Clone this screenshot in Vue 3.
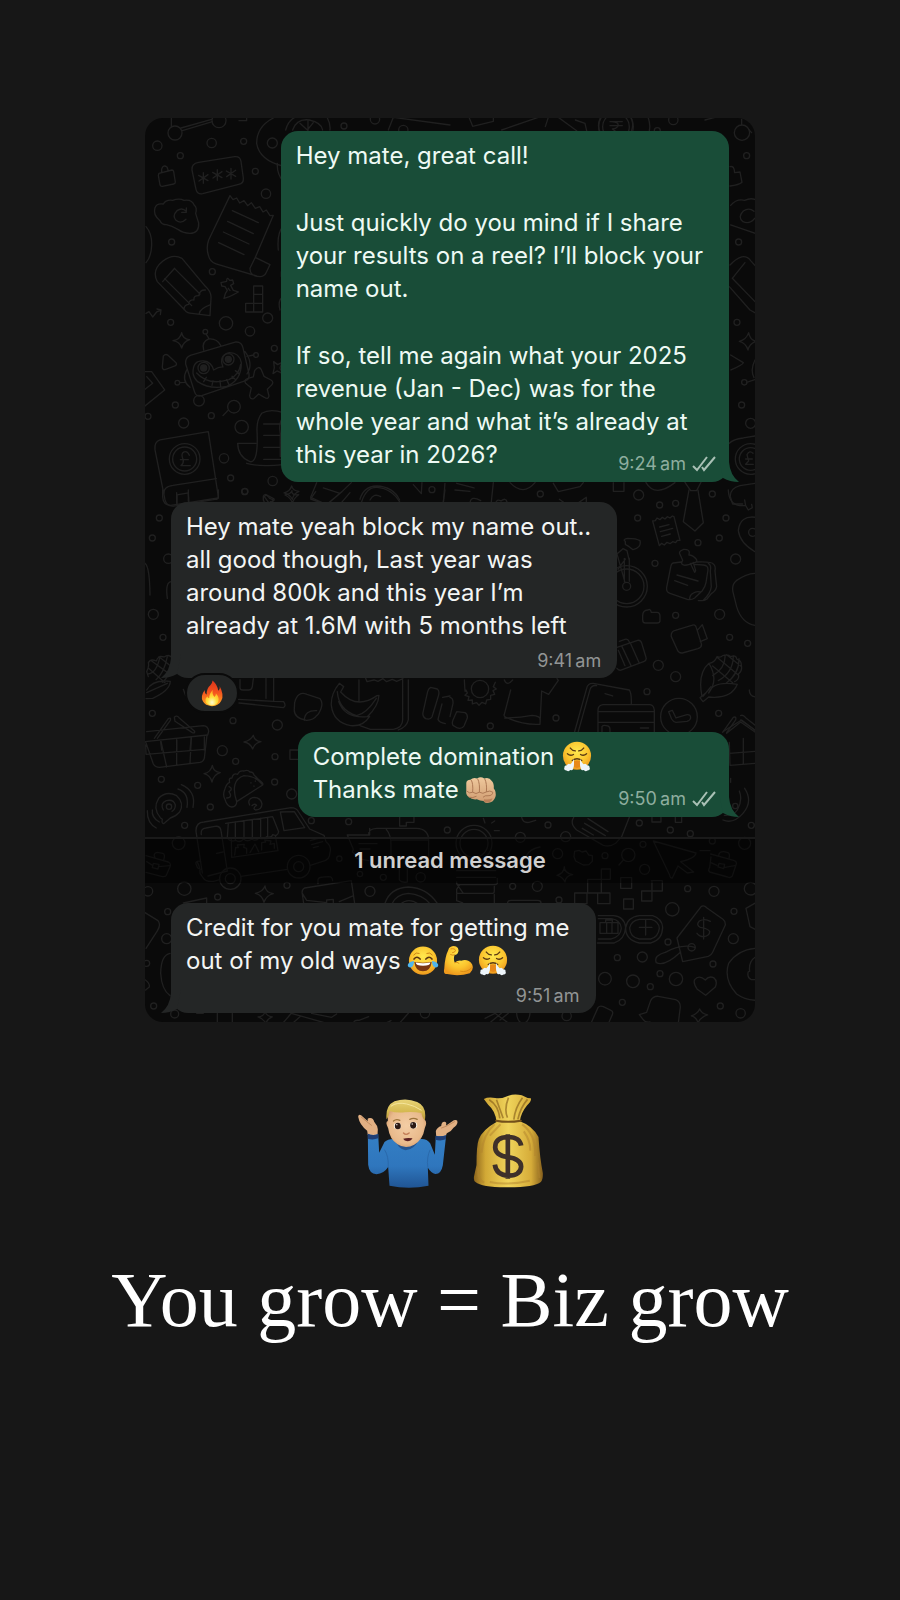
<script setup>
const messages = [
  {
    id: 1,
    side: 'out',
    layout: 'inset',
    time: '9:24\u2009am',
    paragraphs: [
      [['Hey mate, great call!']],
      [['Just quickly do you mind if I share'], ['your results on a reel? I’ll block your'], ['name out.']],
      [['If so, tell me again what your 2025'], ['revenue (Jan - Dec) was for the'], ['whole year and what it’s already at'], ['this year in 2026?']],
    ],
  },
  {
    id: 2,
    side: 'in',
    layout: 'stacked',
    time: '9:41\u2009am',
    reaction: 'fire',
    paragraphs: [
      [['Hey mate yeah block my name out..'], ['all good though, Last year was'], ['around 800k and this year I’m'], ['already at 1.6M with 5 months left']],
    ],
  },
  {
    id: 3,
    side: 'out',
    layout: 'beside',
    time: '9:50\u2009am',
    paragraphs: [
      [['Complete domination ', 'steam'], ['Thanks mate ', 'fist']],
    ],
  },
  {
    id: 4,
    side: 'in',
    layout: 'stacked',
    time: '9:51\u2009am',
    unread: true,
    paragraphs: [
      [['Credit for you mate for getting me'], ['out of my old ways ', 'joy', 'muscle', 'steam']],
    ],
  },
];

const emojiNames = {
  steam: 'face with steam from nose',
  fist: 'oncoming fist',
  joy: 'face with tears of joy',
  muscle: 'flexed biceps',
  fire: 'fire',
};

// wallpaper bubbles: each tile has its own origin, dots are [x, y, radius]
const tiles = [
  { at: [140, 110], dots: [[52,107,14],[215,99,14],[121,137,9],[311,94,9],[397,99,15],[105,69,21],[237,32,21],[346,184,9],[378,251,14],[95,396,9],[217,485,9],[92,637,9],[258,640,20],[330,664,14],[383,624,15],[403,715,9],[106,885,9],[24,919,9],[214,917,9],[282,890,19],[131,939,15],[305,951,20],[252,1045,14],[272,1104,9],[398,1113,14],[315,1144,9],[177,872,16],[196,665,7],[348,735,7],[112,818,7],[612,48,9],[705,28,14],[790,60,14],[876,1139,9],[134,1047,46],[134,1047,36]] },
  { at: [450, 110], dots: [[670,30,14],[876,68,23],[890,137,9],[866,396,9],[861,637,9],[875,885,9],[902,940,15],[883,817,8],[498,50,52],[498,50,40],[902,1047,46],[902,1047,34],[622,62,9]] },
  { at: [140, 490], dots: [[58,84,9],[37,144,9],[40,373,15],[69,442,9],[37,670,9],[279,692,9],[412,705,15],[85,206,14],[314,5,9]] },
  { at: [450, 490], dots: [[271,12,9],[566,15,15],[629,45,9],[677,40,9],[787,12,9],[828,84,9],[563,84,9],[744,158,9],[808,144,9],[857,207,15],[615,220,9],[677,376,9],[809,373,15],[839,442,9],[893,460,9],[625,526,15],[677,560,15],[591,605,9],[806,670,9],[318,684,9],[121,708,9],[530,289,62],[530,289,52],[530,289,12],[90,597,26],[687,680,55],[908,127,12]] },
  { at: [140, 720], dots: [[247,92,15],[287,124,9],[405,110,9],[404,186,9],[455,222,15],[64,178,9],[173,196,9],[211,261,9],[134,316,9],[116,370,19],[133,506,20],[233,531,9],[441,496,9],[24,514,14],[514,302,9],[626,305,9],[598,416,8],[690,514,15],[660,462,8],[730,472,9],[842,472,14],[922,330,9],[271,476,32],[271,476,15],[476,440,34],[476,440,15],[87,260,8],[83,575,9],[80,656,15],[41,858,9],[104,882,12],[20,730,9],[855,880,14]] },
  { at: [450, 720], dots: [[294,315,9],[211,352,15],[347,350,15],[568,309,9],[661,330,9],[721,341,9],[579,373,9],[323,401,15],[465,407,9],[535,405,20],[584,448,15],[787,363,9],[884,370,18],[904,316,9],[188,499,9],[262,499,15],[327,540,9],[713,506,9],[792,514,15],[667,568,20],[852,574,9],[850,656,15],[654,666,9],[502,713,9],[577,711,15],[630,761,9],[678,777,20],[465,776,19],[549,784,19],[601,800,9],[517,847,9],[789,732,9],[811,858,9],[872,880,14],[725,682,11],[72,370,54],[72,370,42],[902,506,19],[856,258,8],[350,888,14]] },
];
</script>

<template>
  <main class="page">
    <!-- shared emoji artwork -->
    <svg class="sprites" aria-hidden="true">
      <defs>
        <radialGradient id="yellow-fill" cx=".5" cy=".35" r=".65">
          <stop offset="0" stop-color="#ffe94f" />
          <stop offset=".6" stop-color="#fbc52e" />
          <stop offset="1" stop-color="#ee991d" />
        </radialGradient>
        <linearGradient id="hand-fill" x1="0" y1="0" x2="0" y2="1">
          <stop offset="0" stop-color="#efc99d" />
          <stop offset="1" stop-color="#cf9b70" />
        </linearGradient>
        <linearGradient id="flame-fill" x1="0" y1="0" x2="0" y2="1">
          <stop offset="0" stop-color="#d9341b" />
          <stop offset=".45" stop-color="#f4511e" />
          <stop offset="1" stop-color="#ffab22" />
        </linearGradient>
        <radialGradient id="core-fill" cx=".5" cy=".8" r=".7">
          <stop offset="0" stop-color="#fffbd0" />
          <stop offset=".5" stop-color="#ffe13d" />
          <stop offset="1" stop-color="#ffad22" />
        </radialGradient>
      </defs>
      <symbol id="steam" viewBox="0 0 100 100">
        <circle cx="50" cy="46" r="44" fill="url(#yellow-fill)" />
        <ellipse cx="50" cy="72" rx="13" ry="12" fill="#e88918" />
        <g fill="none" stroke="#5b3a13" stroke-width="4" stroke-linecap="round">
          <path d="M29 22Q36 31 45 31M71 22Q64 31 55 31" />
          <path d="M20 40Q29 48 39 42M80 40Q71 48 61 42" />
          <path d="M35 61Q50 50 65 61" />
        </g>
        <g fill="#edf5fa">
          <path d="M40 56Q42 75 39 83Q38 93 29 91Q24 97 17 92Q7 91 11 82Q10 76 18 76Q23 68 29 73Q36 67 40 56Z" />
          <path d="M60 56Q58 75 61 83Q62 93 71 91Q76 97 83 92Q93 91 89 82Q90 76 82 76Q77 68 71 73Q64 67 60 56Z" />
        </g>
      </symbol>
      <symbol id="joy" viewBox="0 0 100 100">
        <circle cx="50" cy="49" r="44" fill="url(#yellow-fill)" />
        <path d="M21 31Q28 21 38 26M79 31Q72 21 62 26" fill="none" stroke="#c98116" stroke-width="3" stroke-linecap="round" />
        <path d="M22 44Q31 33 41 44M78 44Q69 33 59 44" fill="none" stroke="#5b3510" stroke-width="5" stroke-linecap="round" />
        <path d="M23 53Q50 58 77 53Q74 82 50 82Q26 82 23 53Z" fill="#7a3714" />
        <path d="M27 55Q50 59 73 55Q73 65 50 65Q28 65 27 55Z" fill="#fff" />
        <path d="M22 50Q21 69 11 70Q0 69 3 60Q6 53 22 50ZM78 50Q79 69 89 70Q100 69 97 60Q94 53 78 50Z" fill="#4fb5ee" />
      </symbol>
      <symbol id="muscle" viewBox="0 0 100 100">
        <path d="M25 7Q36 0 44 5Q54 10 51 21Q48 31 39 31Q35 45 40 55Q50 47 60 49Q81 42 94 60Q101 77 87 88Q54 99 16 91Q3 91 7 74Q9 37 20 15Q21 9 25 7Z" fill="url(#yellow-fill)" />
        <path d="M40 55Q47 51 53 57M28 12Q41 10 42 17Q41 24 33 24M27 30Q35 34 39 31M58 82Q77 87 92 72" fill="none" stroke="#d88a15" stroke-width="3" stroke-linecap="round" />
      </symbol>
      <symbol id="fist" viewBox="0 0 100 100">
        <path d="M4 29Q4 18 17 18Q26 9 38 14Q49 7 60 14Q76 9 83 21Q91 27 90 45Q99 56 95 72Q89 89 73 90Q62 92 58 84Q47 84 37 79Q22 81 12 72Q2 66 4 52Z" fill="url(#hand-fill)" />
        <path d="M60 79Q73 82 86 76Q83 87 73 89Q62 91 58 84Z" fill="#b78058" />
        <path d="M20 20Q26 29 24 56M40 16Q47 29 45 56M62 16Q69 29 67 55M6 54Q14 63 24 57Q34 65 45 57Q56 64 67 56Q78 50 87 57Q86 68 72 68Q62 66 57 72M13 73Q25 76 35 70" fill="none" stroke="#aa7652" stroke-width="3" stroke-linecap="round" />
      </symbol>
      <symbol id="fire" viewBox="0 0 100 100">
        <path d="M52 5Q71 22 72 42Q80 36 77 25Q95 58 83 78Q75 96 50 97Q25 96 17 79Q8 61 24 39Q24 52 31 55Q30 34 44 22Q51 16 52 5Z" fill="url(#flame-fill)" />
        <path d="M53 39Q49 54 59 64Q65 58 64 52Q78 67 72 82Q66 94 50 95Q34 94 27 82Q25 69 33 62Q35 69 40 69Q40 50 53 39Z" fill="url(#core-fill)" />
      </symbol>
    </svg>

    <section class="chat">
      <svg class="wallpaper" viewBox="145 118 610 904" preserveAspectRatio="xMidYMin slice" aria-hidden="true">
        <g v-for="(tile, t) in tiles" :key="t" :transform="`translate(${tile.at[0]} ${tile.at[1]}) scale(.3333)`">
          <circle v-for="(dot, d) in tile.dots" :key="d" :cx="dot[0]" :cy="dot[1]" :r="dot[2]" />
        </g>

        <!-- password, cloud, receipt, pencil, robot, star, scroll, cash book -->
        <g transform="translate(140 110) scale(.3333)">
          <path d="M127 62L217 35M123 54L215 28M94 51V20M350 100Q350 50 400 24M350 100Q358 150 428 168M437 60Q448 18 490 15M570 60Q572 40 560 20M458 60Q470 25 508 30Q545 38 548 60M480 40L502 60L520 38M504 62V30M297 32H320V24M745 60L760 22L930 45M412 160Q410 190 430 215" />
          <path d="M176 157L284 140Q300 138 303 154L310 204Q312 220 296 223L188 251Q172 254 168 238L156 180Q154 160 176 157ZM190 188V220M176 196L204 212M204 194L177 213M232 179V211M218 187L246 203M246 185L219 204M273 175V207M259 183L287 199M287 181L260 200" />
          <path d="M57 190L96 180Q100 180 101 185L106 216Q106 221 101 222L67 229Q62 230 60 225L55 196ZM65 188V177Q70 163 81 171L85 182" />
          <path d="M60 332Q38 315 45 293Q50 279 70 282Q78 268 98 271Q118 264 132 271Q156 267 163 286Q172 293 167 310Q170 320 176 339Q178 370 150 370Q130 370 115 359Q95 347 79 344Q65 344 60 332ZM139 304Q126 291 111 302Q96 317 108 331Q123 343 138 328M139 294V307H125" />
          <path d="M270 257L279 269L290 264L299 279L312 272L323 287L334 278L346 295L359 290L369 306L379 300L390 317L400 316L346 442L330 475Q329 500 360 500Q373 499 378 489L390 464L347 443M270 257L206 390Q198 413 205 435Q209 456 228 462L350 498M277 302L355 338M263 334L340 371M250 366L327 402M236 398L312 434" />
          <path d="M52 515Q34 481 68 454Q98 430 126 445L196 529Q215 546 213 565L210 617L156 610Q142 610 135 601L52 515ZM68 515L104 475M74 506L155 587M104 476L180 552M132 599Q132 584 146 583Q147 568 162 570Q160 556 177 557Q178 539 196 540M178 610Q181 596 210 585" />
          <path d="M243 518L260 514Q260 498 269 511L278 510L281 521L272 526L280 541L295 546Q285 552 266 561L252 565L256 551L262 541L255 530L245 528ZM265 535L270 542M341 528H368V606H317V580H341V528ZM341 553H368M341 580H368M341 580V606M18 610L27 605L38 621L50 606L62 601M51 597L63 600L61 614" />
          <path d="M125 668Q129 689 149 689Q130 695 125 714Q120 695 99 692Q121 689 125 668ZM70 738Q77 730 84 736L108 758Q112 764 105 768L75 779Q67 780 67 770ZM15 785L35 785L74 840L15 888M20 800L38 820L15 838" />
          <path d="M151 736L288 696Q305 695 309 714L327 792Q329 807 317 812L185 857Q168 862 163 844L137 762Q135 742 151 736ZM159 790Q158 750 191 753Q214 755 221 780Q237 770 249 771Q235 736 268 728Q298 728 304 758Q305 810 260 829Q210 840 173 815Q161 804 159 790ZM170 789Q205 828 267 809Q297 795 302 763M191 815L199 802M216 826L219 813M242 830L240 812M267 824L260 809M287 809L276 799M297 791L286 782M193 773L198 774M263 748L268 749M191 720Q184 696 206 687Q230 684 242 706M207 686L199 673M315 725Q342 761 321 792M140 780Q123 811 150 832M119 818L134 817M321 739L341 735" />
          <circle cx="191" cy="774" r="17" />
          <circle cx="265" cy="748" r="17" />
          <circle class="solid" cx="191" cy="774" r="9" />
          <circle class="solid" cx="265" cy="748" r="9" />
          <path d="M344 782Q356 765 364 779L372 799L393 810Q404 817 393 827L382 838L387 858Q385 870 373 862L356 852L341 866Q329 869 329 856L334 834L317 820Q310 809 324 805L340 801ZM265 900L249 917M401 755L413 764L426 757L420 774L427 790L411 783L399 791L403 773Z" />
          <path d="M430 908Q390 895 365 910Q350 930 351 960Q356 1060 330 1055Q294 1041 293 1000H348M320 1060Q360 1072 430 1064M371 942H430M371 976H430M371 1012H430M371 1048H430M430 920Q415 940 421 970V1040" />
          <path d="M60 990L205 965L235 1160Q235 1168 225 1168L105 1188Q80 1192 75 1170L45 1020Q42 996 60 990ZM72 1155Q68 1130 99 1126L229 1106M111 1187V1155L145 1149L147 1180M148 1036Q142 1022 132 1026Q121 1031 130 1050Q131 1061 123 1067H151M121 1049H145" />
          <path d="M370 1159Q374 1149 385 1158L402 1167Q405 1174 391 1175Q391 1185 378 1188L370 1170ZM455 1128Q458 1143 477 1144Q460 1151 457 1168Q449 1153 432 1149Q450 1144 455 1128ZM530 1118L512 1162L560 1184L606 1145L634 1118M550 1134L600 1150M660 1168Q670 1130 710 1128Q760 1130 779 1170M690 1170Q702 1148 722 1160M820 1124L844 1151L846 1118M915 1120L910 1180M18 350Q36 370 35 405Q34 440 18 458M430 348Q410 370 415 420M424 485V500M430 560Q412 570 420 600" />
        </g>

        <g transform="translate(450 110) scale(.3333)">
          <path d="M58 24L68 49L130 34V22M155 60L265 22M295 22L286 50M325 22L380 62M376 30L405 40L410 62M450 65Q440 45 452 22M545 62Q552 40 543 22M480 35H517M480 47H517M484 35Q510 36 503 50Q498 57 487 57L505 70M595 24Q602 45 598 62M765 30L795 22M875 45V28M896 58L905 68M840 170Q853 166 854 188L870 186L876 217Q868 225 840 228M842 286Q860 265 884 271Q904 262 918 270M912 304Q897 291 880 303Q862 322 879 335Q899 344 914 325M842 345L918 371M840 465Q880 423 902 452L918 470M847 505L885 458M847 505L915 575M838 530L900 600L918 610M896 668Q900 690 918 694Q899 700 894 720Q888 699 868 694Q889 689 896 668ZM842 735L880 758Q880 763 843 780M915 750Q900 780 912 803M890 817L915 809M838 1000Q850 987 880 984L915 978M909 1030Q899 1020 891 1034L896 1053L887 1063H910M887 1047H907M915 1120L870 1127Q840 1135 841 1160L848 1182H878" />
          <path d="M15 1140L60 1144M20 1120L72 1134M60 1180Q62 1155 92 1172M137 1180Q140 1166 153 1173Q167 1162 171 1175L156 1188ZM180 1118Q220 1160 255 1118M310 1120L325 1145L390 1130L400 1118M328 1168L345 1180M386 1178L409 1162V1185M490 1118V1144H522V1118M588 1118Q615 1164 675 1118M705 1117L722 1142H740L753 1117M130 1118L123 1185" />
        </g>

        <!-- corn, tie, notes, bike, camera, suitcase, phones, fruit -->
        <g transform="translate(140 490) scale(.3333)">
          <path d="M15 220Q29 230 30 315M95 275Q75 275 82 325M25 560L20 545Q28 530 25 518Q32 505 49 513Q54 495 72 501Q86 492 95 502M25 534L75 578M35 513L91 554M57 500L95 530M23 552Q50 550 60 499M48 569Q72 550 82 500M68 577Q90 556 95 525M20 600Q38 568 91 574Q90 602 38 625L18 626M20 608L82 580M68 0V20Q69 45 92 46L235 24V0M110 40V8M145 34V0M373 20Q378 10 389 25L401 30L390 43ZM456 2Q454 17 476 14Q461 25 457 40Q454 24 435 15Q452 12 456 2ZM527 5L512 27L562 45M630 8L605 37M665 35Q680 -10 711 -8Q755 -5 780 37M915 0L910 35" />
          <path d="M300 569V593Q300 600 309 600H327Q336 599 337 590L340 566M378 565V625M401 565V634L431 635Q440 648 430 653L297 639M295 628L400 634M464 638Q473 602 501 613L540 626Q550 638 543 656Q536 673 530 677Q521 690 500 691Q460 684 463 656ZM493 691Q494 660 530 662M598 580L611 590L602 606Q650 660 711 617L717 616Q715 650 682 680L689 679Q670 710 632 707Q580 697 574 646Q572 612 598 580ZM592 605Q596 661 650 677Q680 670 709 625M596 635Q615 687 682 680M657 570V633M677 565L681 575L702 570L714 574L729 566L740 575L757 568L770 574L789 566M788 570V685Q790 713 760 718H691L660 707M805 570V690Q800 712 775 720M872 592L892 597Q900 603 895 619L876 681Q871 690 857 686Q847 680 849 668L863 605Q865 596 872 592ZM908 622L930 618M906 642L894 688Q897 698 916 701M130 598L137 617" />
          <path d="M43 745L85 686Q94 681 91 691L52 745M103 682Q110 674 117 683L164 724Q165 731 157 728L105 694ZM20 725L190 707Q205 708 206 724L203 735L15 755M62 755L65 780M110 749V780M154 743L150 780M193 741V780M340 736Q344 754 363 755Q344 759 338 777Q330 758 312 756Q332 752 340 736Z" />
        </g>

        <g transform="translate(450 490) scale(.3333)">
          <path d="M717 0L700 95L735 123L760 98L744 0M608 93L616 92L621 84L630 89L637 82L645 87L652 80L660 84L667 78L672 80L690 151L682 151L677 158L668 155L660 161L651 157L643 165L635 160L628 167ZM629 111L657 104M631 125L668 115M635 139L661 132M835 0Q837 43 870 47H887L884 30M888 48L895 60L907 53L905 43M918 82Q870 75 865 122Q870 160 918 187M500 193L519 176L531 182L537 208M526 154Q517 149 532 145Q560 145 570 152Q575 173 549 179Q536 168 526 163ZM504 238L526 207M500 188L525 277M523 205V274M538 205V274" />
          <path d="M694 216L670 219Q664 220 662 232L650 292Q648 306 660 310L712 328Q724 331 734 324L757 302Q766 290 768 278L774 240Q775 226 760 225L734 223M738 216Q787 214 790 222Q798 227 795 243L800 289Q798 302 784 311L771 327Q764 333 745 332M775 220Q785 225 781 243L784 290Q782 310 760 331M681 255L744 273M674 272L713 286M719 328Q719 314 729 310Q739 302 752 306M690 193Q684 184 701 178Q717 177 718 187L717 195Q729 195 740 209Q743 217 732 218Q709 228 700 225Q691 222 698 211Q694 202 690 193ZM721 220L734 247L737 242L730 217" />
          <path d="M918 250Q890 250 859 272Q843 285 850 310L860 350Q875 400 915 406M578 378Q578 360 594 360Q601 355 604 367H622Q629 367 630 377V392Q630 399 621 399H586Q578 399 578 389ZM676 421L725 406Q736 401 739 413L754 461Q757 472 744 476L697 489Q685 490 681 477L664 440Q662 424 676 421ZM742 421L757 404L772 446L751 455M501 472L563 451Q572 450 575 459L588 502Q591 511 581 515L515 540Q508 543 501 535M508 454L525 448Q535 445 539 459M505 481L525 527M516 470L543 527M541 459L568 520M756 620Q742 550 777 520Q807 570 776 609M776 609Q789 571 862 583Q844 628 776 621L759 635L750 623L766 610M783 590L760 618M778 520Q794 517 801 500Q812 504 818 497Q835 491 842 500Q858 493 861 508Q875 510 874 527Q878 543 865 552Q870 567 854 575M788 528L848 578M803 503L865 555M830 494L875 530M788 557Q828 533 825 495M805 572Q850 547 850 498M828 580Q868 551 867 506" />
          <path d="M43 570L45 604L48 600L52 609L45 616L57 620L54 631L67 630L67 642L80 638L87 646L96 637L107 642L110 630L122 628L122 616L134 613L129 602L139 597L130 590L136 577M163 570Q171 590 188 570M182 600L163 673Q160 680 172 684Q223 706 270 703L275 603L296 613L325 571L321 566M164 684Q210 684 246 676Q273 678 270 690M372 732L410 595Q413 579 430 580L538 600Q545 610 544 641M384 728L420 599Q425 584 440 587M465 611L488 618M444 728V661Q444 646 459 644H600Q611 645 613 660V726M444 665H613M444 697H613M456 726V710Q460 704 473 708Q480 710 480 718V726M571 714H596M656 665L667 661L678 684L711 674Q722 673 722 684Q721 691 711 694L678 697Q670 696 665 687ZM0 622Q10 624 9 640L0 680M20 665L45 668Q53 672 52 684L42 708Q36 718 22 714L9 706Q5 700 9 690ZM898 600Q898 619 918 621M818 727L850 682Q860 678 857 690L830 728M872 677Q879 673 887 683L918 708M872 690L915 720M830 730L872 696L915 726" />
        </g>

        <!-- basket, taco, podcast, food truck, briefcase, tag -->
        <g transform="translate(140 720) scale(.3333)">
          <path d="M17 66L40 132Q45 142 59 142L180 127Q190 125 193 115L201 45M63 64L80 141M110 60V136M154 54L150 130M17 75L18 103L194 88M217 136Q220 155 241 158Q221 163 216 186Q211 166 192 161Q212 157 217 136ZM450 90H475M450 90V118H475M255 238Q247 225 255 206Q260 190 269 187Q265 173 276 174Q279 158 293 163Q298 150 312 153Q323 148 330 156Q340 155 342 165Q351 173 355 178Q372 190 368 195L290 245Q290 260 275 261Q261 260 255 238ZM290 245Q269 181 312 167Q350 168 368 195M333 188V189M346 183V184M342 198V199M260 234Q279 233 267 215Q281 206 267 200M329 255Q321 239 338 233Q361 230 366 252Q365 269 347 270Q336 266 350 256Q344 249 336 257" />
          <path d="M61 293Q37 265 56 235Q79 211 110 227Q134 249 119 276Q106 290 91 294L71 311Q64 310 67 298ZM70 270Q59 250 79 242Q101 237 106 255Q106 269 96 274M114 207Q148 218 141 262M124 194Q169 213 159 262M37 270Q34 293 58 306M22 272Q21 309 49 324" />
          <path d="M171 425Q181 440 180 460L191 476Q197 486 221 484L239 479M303 469L442 448M511 436L548 424Q569 421 570 398Q576 379 558 365L552 346L509 327L476 276Q470 263 453 263L192 306Q167 307 168 334L187 459M184 344Q181 326 198 324L225 319Q241 317 243 332L262 453L204 468M230 400L249 396M421 276L463 275L494 323L432 332ZM257 310L398 290L416 335Q413 351 398 344Q394 355 380 350Q371 361 357 354Q346 366 335 357Q322 368 311 357Q299 370 287 361Q269 368 262 352L265 310M286 306V360M312 302V356M337 299V357M362 295V350M383 293V349M274 357L275 412L414 392L406 346M284 405L287 382L295 383L292 375L313 373L311 382L320 385V400M330 398L345 372L356 395M365 390V368L377 366L374 360L393 363L390 373L403 370V385M511 362L543 353M515 374L548 365M520 383L535 379M182 424Q162 421 170 437Q172 447 183 448" />
          <path d="M18 407L85 426Q93 430 91 438L79 466Q76 471 67 470L18 457M45 413Q38 400 52 397L68 400Q77 402 71 420M20 425L38 436M56 440L88 437M40 430L57 433L54 447L37 443ZM375 498Q377 518 400 521Q379 526 372 547Q367 525 346 520Q369 515 375 498ZM494 504L634 482L644 550M494 504Q484 509 487 522L491 550M534 491V479Q536 471 550 471L567 470Q577 470 578 482M487 520L500 541L560 548M560 548V540L580 538V548M598 545L639 528M735 550Q750 504 805 501Q860 503 892 550M757 550Q769 523 805 520Q846 523 869 550M782 552Q805 532 835 552M130 549L200 534V550M15 578L54 602Q64 614 52 633L18 685M90 700Q63 705 62 760Q65 810 90 827M16 780Q30 790 28 801L17 810" />
          <path d="M779 292V318H799V307H822V292M622 345H686Q684 327 710 325H830Q865 326 866 360V430M739 328Q754 345 753 378V425M689 325V345M657 371H711M660 387H690M622 345L640 388L637 396L649 405V415L686 422M778 430V480Q784 489 802 486V430M755 360H866" />
          <path d="M375 875Q379 888 397 891Q382 896 378 910Q370 896 354 891Q371 890 375 875ZM232 880V910M277 880V910M430 908L454 880L560 910M480 890L460 908M515 880L575 892L590 882M170 880H190M642 910Q640 900 657 901L686 890M740 908L753 902M780 908L805 880" />
        </g>

        <g transform="translate(450 720) scale(.3333)">
          <path d="M100 295L105 309M125 309L134 303M133 332H148M215 292Q219 310 237 307L257 301M371 292Q359 312 380 330L460 376Q480 382 497 370L515 350L538 292M414 296L474 335M404 310L466 347M397 325L430 345M606 292V306H633V292M676 292V307H695V292M30 415L35 424M111 415L107 423M20 452H137M20 472H137M20 492L40 520M142 475V490Q141 494 130 494H30Q18 494 20 486M30 494Q24 501 20 508V520H128Q133 520 133 513V499M20 522V542L38 549M133 523V548M173 549Q172 542 184 541H263Q273 541 273 549M343 440Q343 459 368 464Q347 467 345 486Q338 470 321 466Q342 460 343 440Z" />
          <path d="M374 394L387 391L396 396L408 393L416 405L427 407L427 424L417 434L400 435L377 423L372 410ZM520 420L507 435M610 363L738 399Q737 415 692 425L731 456L712 459L684 438L667 474Q660 475 659 465ZM782 402L851 421Q861 424 859 432L847 468Q841 475 833 471L779 456Q773 451 779 443L783 411M806 407Q807 394 822 395L834 398Q841 402 837 416M781 427L801 436M821 443L858 436M807 430L824 433L821 446L804 441ZM374 519H480V551H443V519M411 519V551H374V519M413 478H454V519M413 478V519M454 447H481V478H454V447ZM512 473H545V505H512V473ZM604 482H637V513H575V543H606V482ZM521 537H550V567H521V537ZM229 408Q239 386 270 381M750 392H780" />
          <path d="M445 587H490Q523 589 527 622Q524 659 493 669H442M445 596H484Q512 600 514 625Q512 650 484 657H445M568 587H608Q636 596 638 622Q637 660 603 669H568Q527 660 527 624Q531 592 568 587ZM568 598H604Q627 605 628 625Q625 650 603 657H568Q540 652 539 624Q543 602 568 598ZM587 600V645M568 622H606M450 608H504V640H450V608ZM467 608V600H487V608M470 609V639M486 609V639M754 559Q763 555 771 564L819 598Q827 604 826 615L788 697Q784 706 775 709L698 725L681 654ZM781 604Q765 594 748 603Q737 615 751 622Q771 624 779 634Q780 647 762 650Q748 650 741 640M761 592V657M735 682Q695 670 646 697Q610 707 619 728Q644 741 692 696M766 780Q747 763 734 779Q729 790 742 808L767 826L796 801Q804 783 791 773Q777 767 766 780ZM568 884L590 877L602 842Q609 828 625 829L677 839Q691 844 691 861L685 909M568 884L579 898Q587 909 600 906M749 867Q754 880 773 885Q752 891 744 909Q740 892 724 888Q743 881 749 867ZM424 908L444 863Q449 856 460 860L483 871Q491 875 487 884L476 909M888 565L914 550M888 565L900 620L916 628M918 685Q864 689 836 730Q820 779 860 822Q883 839 918 841M918 710Q895 724 899 754M895 755Q890 772 904 779H916M838 67L840 136L915 130M838 100L918 94M880 55V132M820 34L875 0L918 33M868 213Q879 240 862 270Q851 288 823 286M884 205Q910 244 879 280Q850 313 819 300M200 880Q202 908 219 910Q237 908 240 880M105 895L135 880L172 907M120 908L154 880M150 900L175 880M842 187V175M818 245Q815 270 835 260" />
        </g>
      </svg>

      <template v-for="msg in messages" :key="msg.id">
        <div v-if="msg.unread" class="unread">1 unread message</div>

        <article class="bubble" :class="[msg.side, msg.layout]">
          <svg class="tail" viewBox="0 0 24 24" aria-hidden="true">
            <path d="M4 0H14V4Q15 17 24 24Q15 24 8 20Z" />
          </svg>
          <div class="body">
            <p v-for="(paragraph, p) in msg.paragraphs" :key="p">
              <span v-for="(line, l) in paragraph" :key="l" class="line">{{ line[0] }}<svg
                v-for="name in line.slice(1)" :key="name" class="emoji" role="img" :aria-label="emojiNames[name]"
              ><use :href="`#${name}`" /></svg></span>
            </p>
          </div>
          <div class="meta">
            <time>{{ msg.time }}</time>
            <svg v-if="msg.side === 'out'" class="ticks" viewBox="0 0 24 16" role="img" aria-label="Delivered">
              <path d="M1 10L5 14L15 1M10 11L12 14L23 1" />
            </svg>
          </div>
          <button v-if="msg.reaction" class="reaction" type="button" :aria-label="emojiNames[msg.reaction]">
            <svg><use :href="`#${msg.reaction}`" /></svg>
          </button>
        </article>
      </template>
    </section>

    <div class="figures">
      <svg class="shrug" viewBox="50 55 305 270" role="img" aria-label="man shrugging">
        <defs>
          <linearGradient id="sweater" x1="0" y1="0" x2="0" y2="1">
            <stop offset="0" stop-color="#347fc4" />
            <stop offset=".6" stop-color="#2f76bd" />
            <stop offset="1" stop-color="#205594" />
          </linearGradient>
          <radialGradient id="face" cx=".5" cy=".5" r=".6">
            <stop offset="0" stop-color="#f3cda4" />
            <stop offset=".7" stop-color="#e9ba8c" />
            <stop offset="1" stop-color="#cd9364" />
          </radialGradient>
          <linearGradient id="hair" x1="0" y1="0" x2="0" y2="1">
            <stop offset="0" stop-color="#e8d477" />
            <stop offset=".6" stop-color="#d4b84f" />
            <stop offset="1" stop-color="#b9953a" />
          </linearGradient>
        </defs>
        <path d="M82 166L80 153Q57 135 53 111Q54 102 62 107L82 125Q79 114 89 115Q99 116 101 126Q111 137 112 149L111 167Z" fill="#e2b083" />
        <path d="M287 170L286 154Q290 143 302 139Q303 125 313 126Q320 128 316 138L340 122Q352 119 351 128Q350 138 339 144Q331 157 319 161L314 172Z" fill="#e2b083" />
        <path d="M62 112L84 130L93 137M342 126L319 139L303 145" fill="none" stroke="#c28c5f" stroke-width="3" stroke-linecap="round" />
        <path d="M82 162Q97 170 113 163L116 219L132 187Q142 178 158 178H239Q259 176 269 191L283 225L286 168Q301 172 317 167L307 257Q302 284 284 283Q272 280 262 264L264 318Q205 330 147 318L143 262Q130 282 108 284Q86 282 83 255Z" fill="url(#sweater)" />
        <path d="M82 162Q97 170 113 163V176Q97 182 82 177ZM286 168Q301 172 317 167L316 179Q300 185 285 180Z" fill="#203e75" />
        <path d="M132 210Q145 230 143 262M269 210Q258 232 262 264" fill="none" stroke="#2a69ab" stroke-width="3" />
        <path d="M162 178Q193 221 236 178Q222 210 195 212Q173 208 162 178Z" fill="#25548f" />
        <path d="M142 105Q141 78 163 73L232 75Q252 84 253 120Q261 128 253 145Q247 181 221 195Q196 210 171 194Q147 178 143 146Q133 127 142 124Z" fill="url(#face)" />
        <path d="M138 119Q134 78 162 65Q197 53 230 67Q260 80 253 122Q245 116 243 100Q219 96 193 98Q166 100 147 94Q145 112 138 119Z" fill="url(#hair)" />
        <path d="M151 80Q169 66 199 73Q222 78 243 92" fill="none" stroke="#f5e59b" stroke-width="3" />
        <path d="M159 124Q167 117 178 122M208 119Q219 113 230 119" fill="none" stroke="#9d743b" stroke-width="4" stroke-linecap="round" />
        <ellipse cx="171" cy="139" rx="11" ry="10" fill="#fff9ed" />
        <ellipse cx="219" cy="137" rx="11" ry="10" fill="#fff9ed" />
        <ellipse cx="172" cy="139" rx="9" ry="10" fill="#2b1914" />
        <ellipse cx="218" cy="137" rx="9" ry="10" fill="#2b1914" />
        <circle cx="169" cy="135" r="2" fill="#fff" />
        <circle cx="215" cy="133" r="2" fill="#fff" />
        <path d="M189 160Q196 168 206 160" fill="none" stroke="#c47e57" stroke-width="4" stroke-linecap="round" />
        <path d="M188 177Q202 173 216 176Q211 185 201 185Q191 184 188 177Z" fill="#5c2022" />
      </svg>
      <svg class="money" viewBox="398 42 212 282" role="img" aria-label="money bag">
        <defs>
          <linearGradient id="sack" x1="0" y1="0" x2="1" y2="0">
            <stop offset="0" stop-color="#8d651c" />
            <stop offset=".17" stop-color="#d2a936" />
            <stop offset=".5" stop-color="#f0d45b" />
            <stop offset=".83" stop-color="#d6ac39" />
            <stop offset="1" stop-color="#86601d" />
          </linearGradient>
        </defs>
        <path d="M430 57Q443 50 464 54Q480 58 504 47Q522 41 544 46Q559 55 571 55Q574 63 560 76Q541 99 538 124Q575 137 594 171Q598 234 607 279Q608 298 601 306Q582 322 504 322Q425 323 405 306Q398 301 401 287L408 255Q408 195 415 178Q426 149 468 126Q466 94 443 74Z" fill="url(#sack)" />
        <path d="M446 59Q474 76 478 115M468 59L488 115M504 53Q490 88 501 113M546 53Q524 82 520 119M561 58Q540 82 532 118" fill="none" stroke="#805818" stroke-width="5" opacity=".6" />
        <path d="M467 122Q501 129 541 122" fill="none" stroke="#73501a" stroke-width="6" stroke-linecap="round" />
        <path d="M462 133Q428 164 423 218M480 133L448 167M545 133Q587 163 584 228M550 154Q571 185 569 212M414 262Q408 297 431 308M592 247L597 294M448 306Q500 317 568 302" fill="none" stroke="#b2832d" stroke-width="6" opacity=".5" />
        <path d="M542 197Q538 172 504 171Q464 171 464 202Q465 226 501 231Q542 237 542 260Q540 287 504 287Q467 285 463 254M502 163V296" fill="none" stroke="#3e302a" stroke-width="14" stroke-linecap="butt" />
      </svg>
    </div>

    <h1 class="headline">You grow = Biz grow</h1>
  </main>
</template>

<style>
body {
  background: #171717;
}
</style>

<style scoped>
.page {
  box-sizing: border-box;
  min-height: 100vh;
  padding: 118px 24px 48px;
  display: flex;
  flex-direction: column;
  align-items: center;
  background: #171717;
  color: #f3f5f4;
  font-family: Inter, "Liberation Sans", sans-serif;
}

.sprites {
  position: absolute;
  width: 0;
  height: 0;
}

.chat {
  position: relative;
  isolation: isolate;
  box-sizing: border-box;
  width: 100%;
  max-width: 610px;
  padding: 13px 26px 9px;
  display: flex;
  flex-direction: column;
  align-items: flex-start;
  gap: 20px;
  overflow: hidden;
  border-radius: 18px;
  background: #0a0a0a;
}

.wallpaper {
  position: absolute;
  z-index: -1;
  inset: 0;
  width: 100%;
  height: 100%;
  fill: none;
  stroke: #202020;
  stroke-width: 4px;
  stroke-linecap: round;
  stroke-linejoin: round;
}

.wallpaper .solid {
  fill: #202020;
}

.bubble {
  position: relative;
  box-sizing: border-box;
  max-width: 100%;
  padding: 8px 26px 6px 15px;
  border-radius: 17px;
  font-size: 24px;
  line-height: 33px;
}

.out {
  align-self: flex-end;
  background: #194d38;
  color: #eefaf4;
  --bubble: #194d38;
  --meta: #8eae9f;
}

.in {
  background: #242626;
  --bubble: #242626;
  --meta: #929595;
}

.inset,
.beside {
  padding-bottom: 11px;
}

.beside {
  padding-right: 133px;
}

.bubble p {
  margin: 0;
}

.bubble p + p {
  margin-top: 34px;
}

.line {
  display: block;
}

.emoji {
  width: 32px;
  height: 32px;
  margin: -2px 3px -2px 0;
  vertical-align: -6px;
}

.tail {
  position: absolute;
  right: -10px;
  bottom: 0;
  width: 24px;
  height: 24px;
  fill: var(--bubble);
}

.in .tail {
  right: auto;
  left: -10px;
  transform: scaleX(-1);
}

.meta {
  display: flex;
  align-items: center;
  justify-content: flex-end;
  gap: 6px;
  color: var(--meta);
  font-size: 18px;
  line-height: 22px;
}

.stacked .meta {
  margin: 8px -10px 0 0;
}

.inset .meta,
.beside .meta {
  position: absolute;
  right: 13px;
  bottom: 7px;
}

.ticks {
  width: 24px;
  height: 16px;
  fill: none;
  stroke: #a9c0b5;
  stroke-width: 2px;
}

.reaction {
  position: absolute;
  left: 14px;
  bottom: -35px;
  display: grid;
  place-items: center;
  width: 54px;
  height: 40px;
  padding: 0;
  border: 2px solid #0a0a0a;
  border-radius: 20px;
  background: #242626;
}

.reaction svg {
  width: 28px;
  height: 28px;
}

.bubble:has(.reaction) {
  margin-bottom: 34px;
}

.unread {
  align-self: stretch;
  box-sizing: border-box;
  height: 46px;
  margin: 0 -26px;
  border-top: 2px solid #1a1a1a;
  background: rgba(0, 0, 0, 0.5);
  color: #d0d0d0;
  font-size: 22px;
  font-weight: 600;
  line-height: 42px;
  text-align: center;
}

.figures {
  display: flex;
  align-items: flex-end;
  gap: 14px;
  margin-top: 72px;
}

.shrug {
  width: 102px;
  height: 90px;
}

.money {
  width: 71px;
  height: 94px;
}

.headline {
  margin: 64px 0 0;
  color: #fff;
  font-family: "Liberation Serif", serif;
  font-size: 78px;
  font-weight: 400;
  line-height: 96px;
  text-align: center;
}
</style>
